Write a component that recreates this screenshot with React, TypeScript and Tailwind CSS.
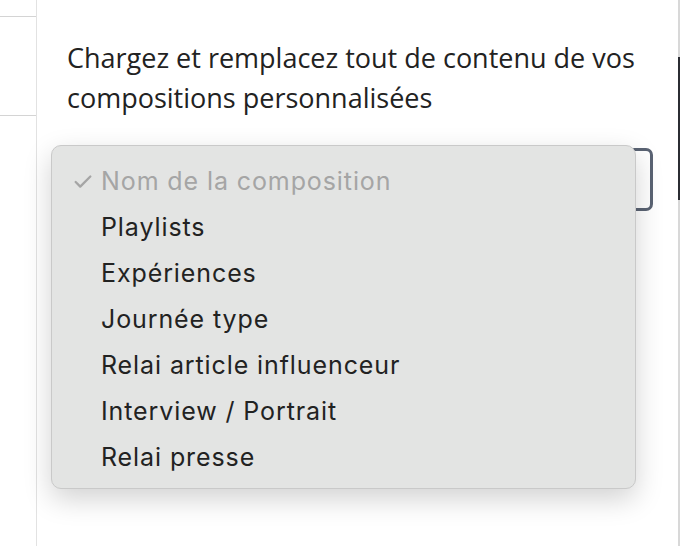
import { Check } from 'lucide-react'

const options = [
  'Playlists',
  'Expériences',
  'Journée type',
  'Relai article influenceur',
  'Interview / Portrait',
  'Relai presse',
]

export default function App() {
  return (
    <div className="flex h-[546px] w-[680px] overflow-hidden bg-white">
      {/* Left rail */}
      <div className="w-[37px] shrink-0 border-r border-[#e2e2e2] pt-[16px]">
        <div className="h-[100px] border-y border-[#d4d4d4]" />
      </div>

      {/* Panel */}
      <div className="relative flex-1 pl-[30px] pr-[25px] pt-[38px]">
        <p className="font-['Open_Sans',sans-serif] text-[27px] leading-[40px] text-[#222]">
          Chargez et remplacez tout de contenu de vos compositions personnalisées
        </p>

        {/* Select underneath */}
        <div className="mt-[30px] h-[63px] rounded-[7px] border-[3px] border-[#5a6373] bg-white" />

        {/* Open dropdown */}
        <div className="absolute left-[14px] top-[145px] w-[585px] rounded-[10px] border border-[#c9c9c9] bg-[#e3e4e3] pt-[13px] pb-[7px] shadow-[0_10px_28px_rgba(0,0,0,0.18)] font-['Inter',sans-serif] text-[25px] tracking-[0.9px]">
          <div className="flex h-[46px] items-center text-[#a5a5a5]">
            <Check className="ml-[20px] mr-[7px] h-[22px] w-[22px]" strokeWidth={2.5} />
            Nom de la composition
          </div>
          {options.map((o) => (
            <div key={o} className="flex h-[46px] items-center pl-[49px] text-[#222]">
              {o}
            </div>
          ))}
        </div>
      </div>

      {/* Right edge */}
      <div className="w-[2px] shrink-0 bg-[#d8d8d8]">
        <div className="mt-[57px] h-[143px] bg-[#2b2d33]" />
      </div>
    </div>
  )
}
